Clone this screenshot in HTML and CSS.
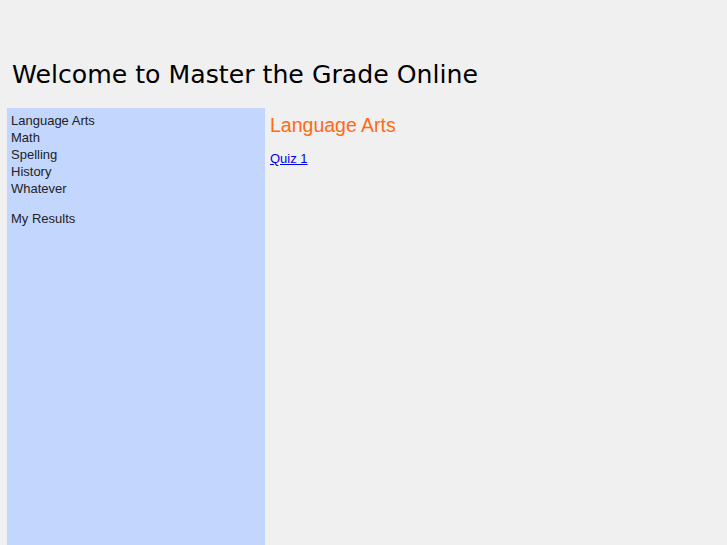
FILE: index.html
```html
<!DOCTYPE html>
<html>
<head>
<meta charset="utf-8">
<link rel="stylesheet" href="styles.css">
</head>
<body>
<div class="header"><h1 class="title">Welcome to Master the Grade Online</h1></div>
<div class="layout">
  <div class="sidebar">
    <ul class="menu">
      <li>Language Arts</li>
      <li>Math</li>
      <li>Spelling</li>
      <li>History</li>
      <li>Whatever</li>
    </ul>
    <ul class="menu">
      <li>My Results</li>
    </ul>
  </div>
  <div class="content">
    <h2 class="section">Language Arts</h2>
    <a class="quiz" href="#">Quiz 1</a>
  </div>
</div>
</body>
</html>
```
FILE: styles.css
```css
html, body { margin: 0; padding: 0; background: #f0f0f0; height: 100%; }
body { padding: 0 0 0 7px; box-sizing: border-box; display: flex; flex-direction: column; overflow: hidden; }
.header { padding: 59px 0 0 5px; height: 49px; flex-shrink: 0; }
.title { margin: 0; font-family: "DejaVu Sans", sans-serif; font-weight: normal; font-size: 25.2px; color: #000; line-height: 32px; }
.layout { display: flex; flex: 1; }
.sidebar { width: 258px; background: #c3d6fe; padding: 4px 4px; box-sizing: border-box; font-family: "Liberation Sans", sans-serif; font-size: 13px; color: #222; }
.menu { list-style: none; margin: 0 0 13px 0; padding: 0; }
.menu li { line-height: 17px; }
.content { padding: 5px 5px; font-family: "Liberation Sans", sans-serif; }
.section { margin: 0 0 12px; font-weight: normal; font-size: 19.5px; color: #ff6a13; line-height: 24px; }
.quiz { font-size: 13px; color: #0000ee; line-height: 15px; }
```
